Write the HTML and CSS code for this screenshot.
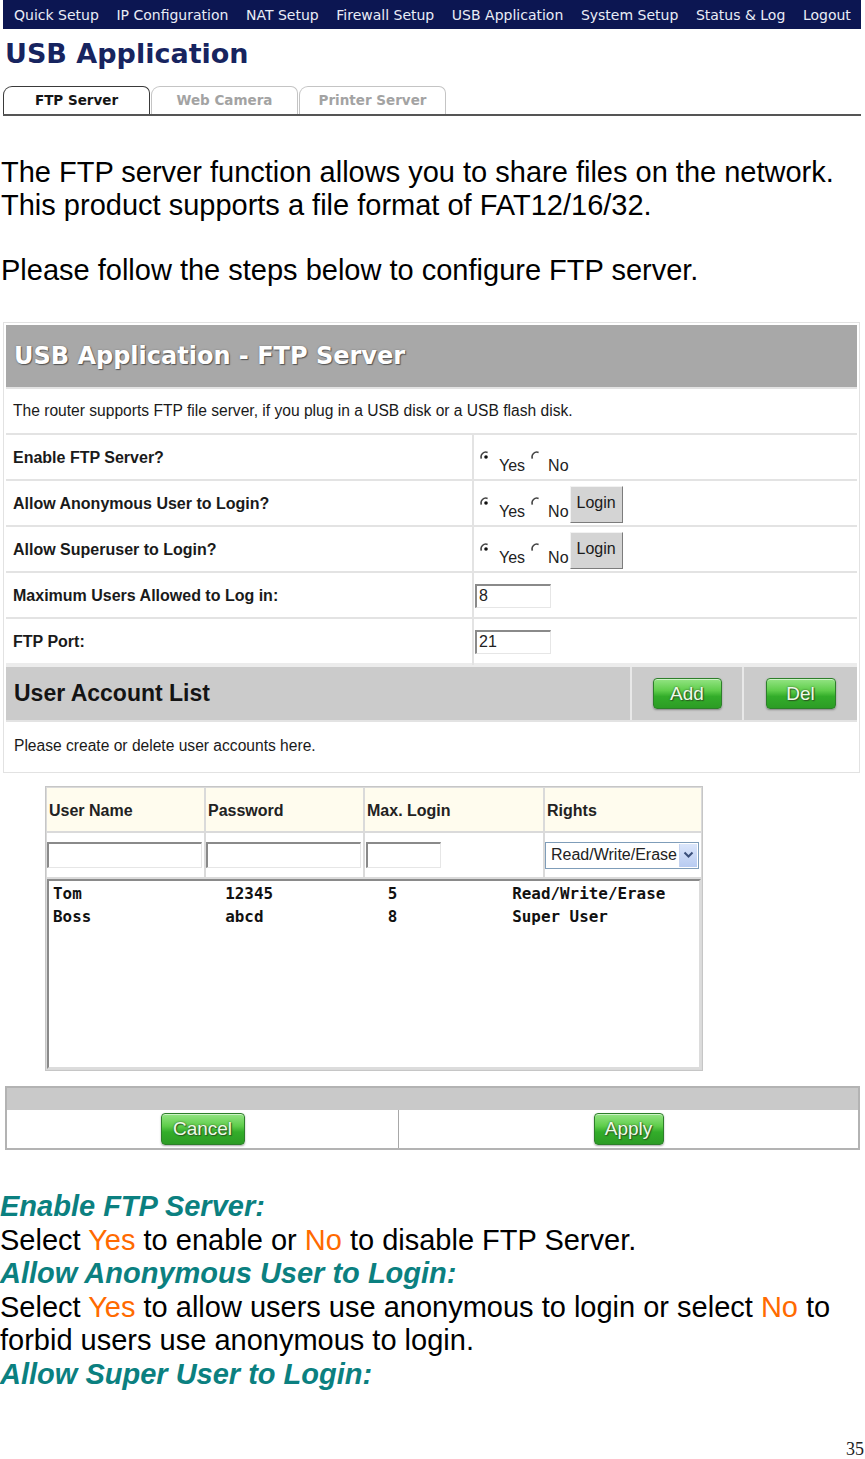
FILE: index.html
```html
<!DOCTYPE html>
<html lang="en">
<head>
<meta charset="utf-8">
<title>USB Application - FTP Server</title>
<link rel="stylesheet" href="styles.css">
</head>
<body>
<div class="page">
  <nav class="topnav">
    <span>Quick Setup</span>
    <span>IP Configuration</span>
    <span>NAT Setup</span>
    <span>Firewall Setup</span>
    <span>USB Application</span>
    <span>System Setup</span>
    <span>Status &amp; Log</span>
    <span>Logout</span>
  </nav>
  <h1 class="heading">USB Application</h1>
  <div class="tabs">
    <div class="tab active">FTP Server</div>
    <div class="tab">Web Camera</div>
    <div class="tab">Printer Server</div>
  </div>

  <div class="intro">
    <p>The FTP server function allows you to share files on the network.<br>This product supports a file format of FAT12/16/32.</p>
    <p class="gap">Please follow the steps below to configure FTP server.</p>
  </div>

  <div class="shot">
    <div class="panel">
      <div class="panel-title">USB Application - FTP Server</div>
      <div class="row info">The router supports FTP file server, if you plug in a USB disk or a USB flash disk.</div>
      <div class="row">
        <div class="label">Enable FTP Server?</div>
        <div class="value">
          <svg class="radio" width="12" height="12" viewBox="0 0 12 12"><path d="M1.4 7.6 A4.8 4.8 0 0 1 7.6 1.4" fill="none" stroke="#444" stroke-width="1.6"/><circle cx="6" cy="6" r="1.8" fill="#111"/></svg>
          <span class="opt yes">Yes</span>
          <svg class="radio" width="12" height="12" viewBox="0 0 12 12"><path d="M1.4 7.6 A4.8 4.8 0 0 1 7.6 1.4" fill="none" stroke="#444" stroke-width="1.6"/></svg>
          <span class="opt no">No</span>
        </div>
      </div>
      <div class="row">
        <div class="label">Allow Anonymous User to Login?</div>
        <div class="value">
          <svg class="radio" width="12" height="12" viewBox="0 0 12 12"><path d="M1.4 7.6 A4.8 4.8 0 0 1 7.6 1.4" fill="none" stroke="#444" stroke-width="1.6"/><circle cx="6" cy="6" r="1.8" fill="#111"/></svg>
          <span class="opt yes">Yes</span>
          <svg class="radio" width="12" height="12" viewBox="0 0 12 12"><path d="M1.4 7.6 A4.8 4.8 0 0 1 7.6 1.4" fill="none" stroke="#444" stroke-width="1.6"/></svg>
          <span class="opt no">No</span>
          <span class="login-btn">Login</span>
        </div>
      </div>
      <div class="row">
        <div class="label">Allow Superuser to Login?</div>
        <div class="value">
          <svg class="radio" width="12" height="12" viewBox="0 0 12 12"><path d="M1.4 7.6 A4.8 4.8 0 0 1 7.6 1.4" fill="none" stroke="#444" stroke-width="1.6"/><circle cx="6" cy="6" r="1.8" fill="#111"/></svg>
          <span class="opt yes">Yes</span>
          <svg class="radio" width="12" height="12" viewBox="0 0 12 12"><path d="M1.4 7.6 A4.8 4.8 0 0 1 7.6 1.4" fill="none" stroke="#444" stroke-width="1.6"/></svg>
          <span class="opt no">No</span>
          <span class="login-btn">Login</span>
        </div>
      </div>
      <div class="row">
        <div class="label">Maximum Users Allowed to Log in:</div>
        <div class="value field"><span class="textbox small">8</span></div>
      </div>
      <div class="row">
        <div class="label">FTP Port:</div>
        <div class="value field"><span class="textbox small">21</span></div>
      </div>
      <div class="acct">
        <div class="acct-title">User Account List</div>
        <div class="acct-cell"><span class="gbtn add">Add</span></div>
        <div class="acct-cell"><span class="gbtn del">Del</span></div>
      </div>
      <div class="row info tall">Please create or delete user accounts here.</div>
    </div>

    <div class="users">
      <div class="uh">User Name</div>
      <div class="uh">Password</div>
      <div class="uh">Max. Login</div>
      <div class="uh">Rights</div>
      <div class="uc"><span class="textbox wide"></span></div>
      <div class="uc"><span class="textbox wide"></span></div>
      <div class="uc"><span class="textbox short"></span></div>
      <div class="uc">
        <span class="select">Read/Write/Erase<span class="sel-arrow"><svg width="11" height="8" viewBox="0 0 11 8"><path d="M1.5 1.5 L5.5 5.5 L9.5 1.5" fill="none" stroke="#3a4f7a" stroke-width="2"/></svg></span></span>
      </div>
      <div class="ulist">
        <div class="listbox">
<pre>Tom               12345            5            Read/Write/Erase
Boss              abcd             8            Super User</pre>
        </div>
      </div>
    </div>

    <div class="actions">
      <div class="actions-bar"></div>
      <div class="actions-row">
        <div class="act-cell"><span class="gbtn cancel">Cancel</span></div>
        <div class="act-cell"><span class="gbtn apply">Apply</span></div>
      </div>
    </div>
  </div>

  <div class="desc">
    <div class="dh">Enable FTP Server:</div>
    <div>Select <span class="hl">Yes</span> to enable or <span class="hl">No</span> to disable FTP Server.</div>
    <div class="dh">Allow Anonymous User to Login:</div>
    <div>Select <span class="hl">Yes</span> to allow users use anonymous to login or select <span class="hl">No</span> to<br>forbid users use anonymous to login.</div>
    <div class="dh">Allow Super User to Login:</div>
  </div>

  <div class="pagenum">35</div>
</div>
</body>
</html>
```

FILE: styles.css
```css
html, body {
  margin: 0;
  padding: 0;
  background: #ffffff;
}

body {
  font-family: "Liberation Sans", Arial, sans-serif;
  color: #000;
}

.page {
  width: 865px;
}

/* top navigation */
.topnav {
  margin: 0 4px 0 3px;
  height: 29px;
  background: #0c1652;
  display: flex;
  align-items: center;
  gap: 17.6px;
  padding-left: 11px;
  font-family: "DejaVu Sans", Verdana, sans-serif;
  font-size: 14px;
  color: #e9ecf6;
  white-space: nowrap;
}

.heading {
  margin: 9px 0 0 0;
  padding-left: 5px;
  height: 32px;
  line-height: 32px;
  font-family: "DejaVu Sans", Verdana, sans-serif;
  font-weight: bold;
  font-size: 27px;
  color: #17245f;
}

/* tabs */
.tabs {
  display: flex;
  margin: 16px 4px 0 3px;
  border-bottom: 2px solid #555;
  height: 28px;
}

.tab {
  box-sizing: border-box;
  width: 147px;
  height: 28px;
  border: 1px solid #c4c4c4;
  border-bottom: 0;
  border-radius: 9px 7px 0 0;
  text-align: center;
  line-height: 27px;
  font-family: "DejaVu Sans", Verdana, sans-serif;
  font-weight: bold;
  font-size: 13.5px;
  color: #a3a3a3;
  margin-right: 1px;
}

.tab.active {
  border-color: #3a3a3a;
  color: #151515;
}

/* intro text */
.intro {
  margin-top: 40px;
  padding-left: 1px;
  font-size: 29px;
  line-height: 32.5px;
}

.intro p {
  margin: 0;
}

.intro p.gap {
  margin-top: 32.5px;
}

/* screenshot area */
.shot {
  margin-top: 36px;
}

.panel {
  margin-left: 3px;
  width: 857px;
  box-sizing: border-box;
  border: 1px solid #e2e2e2;
  padding: 2px;
}

.panel-title {
  height: 62px;
  line-height: 62px;
  background: #a8a8a8;
  padding-left: 8px;
  font-family: "DejaVu Sans", Verdana, sans-serif;
  font-weight: bold;
  font-size: 24px;
  color: #ffffff;
  text-shadow: 1px 1px 1px #555, 0 0 2px #777;
}

.row {
  display: grid;
  grid-template-columns: 466px 1fr;
  border-top: 2px solid #e3e3e3;
  height: 44px;
}

.row.info {
  display: block;
  padding-left: 7px;
  line-height: 44px;
  font-size: 15.6px;
  color: #1a1a1a;
}

.row.info.tall {
  height: 48px;
  line-height: 48px;
  padding-left: 8px;
}

.label {
  padding-left: 7px;
  line-height: 46px;
  font-weight: bold;
  font-size: 16px;
  color: #1a1a1a;
}

.value {
  border-left: 2px solid #e3e3e3;
  display: flex;
  align-items: flex-start;
  padding-left: 6px;
}

.radio {
  margin-top: 16px;
  flex: none;
}

.opt {
  margin-top: 22px;
  line-height: 18px;
  font-size: 16px;
  color: #222;
}

.opt.yes {
  margin-left: 7px;
  margin-right: 6px;
}

.opt.no {
  margin-left: 5px;
  margin-right: 0;
}

.login-btn {
  margin-top: 5px;
  margin-left: 1px;
  box-sizing: border-box;
  width: 53px;
  height: 37px;
  background: #d4d4d4;
  border: 1px solid;
  border-color: #f2f2f2 #7c7c7c #7c7c7c #f2f2f2;
  text-align: center;
  line-height: 32px;
  font-size: 16px;
  color: #1a1a1a;
}

.value.field {
  padding-left: 1px;
  align-items: center;
}

.textbox {
  display: block;
  box-sizing: border-box;
  background: #fff;
  border-style: solid;
  border-width: 2px 1px 1px 2px;
  border-color: #8a8a8a #e6e6e6 #e6e6e6 #8a8a8a;
  font-size: 16px;
  line-height: 20px;
  padding-left: 2px;
  color: #222;
}

.textbox.small {
  width: 76px;
  height: 24px;
}

/* account header */
.acct {
  display: grid;
  grid-template-columns: 1fr 110px 113px;
  column-gap: 2px;
  background: #e8e8e8;
  border-top: 4px solid #ececec;
  height: 53px;
}

.acct-title {
  background: #cbcbcb;
  padding-left: 8px;
  line-height: 53px;
  font-weight: bold;
  font-size: 23px;
  color: #141414;
}

.acct-cell {
  background: #cbcbcb;
  display: flex;
  align-items: center;
  justify-content: center;
}

/* green buttons */
.gbtn {
  display: inline-block;
  box-sizing: border-box;
  height: 32px;
  line-height: 29px;
  text-align: center;
  font-size: 19px;
  color: #eefbe8;
  text-shadow: 0 0 2px #2d5a23, 1px 1px 1px #2d5a23;
  background: linear-gradient(#93e483 0%, #5fcd4b 40%, #33ad2a 60%, #2c9c25 100%);
  border: 1px solid #2d7f2a;
  border-radius: 4px;
  box-shadow: inset 0 1px 0 rgba(255, 255, 255, 0.55), 0 1px 2px rgba(0, 0, 0, 0.35);
}

.gbtn.add { width: 69px; height: 31px; }
.gbtn.del { width: 70px; height: 31px; }
.gbtn.cancel { width: 84px; }
.gbtn.apply { width: 70px; }

/* users table */
.users {
  margin: 13px 0 0 45px;
  width: 658px;
  box-sizing: border-box;
  border: 1px solid #c6c6c6;
  padding: 1px;
  display: grid;
  grid-template-columns: 157px 157px 178px 156px;
  grid-template-rows: 43px 44px 190px;
  gap: 2px;
  background: #dadada;
}

.uh {
  background: #fffcee;
  padding-left: 2px;
  line-height: 45px;
  font-weight: bold;
  font-size: 16px;
  color: #222;
}

.uc {
  background: #fff;
  display: flex;
  align-items: center;
}

.textbox.wide {
  width: 155px;
  height: 26px;
}

.textbox.short {
  margin-left: 1px;
  width: 75px;
  height: 26px;
}

.select {
  position: relative;
  display: flex;
  align-items: center;
  box-sizing: border-box;
  width: 154px;
  height: 27px;
  border: 1px solid #7f9db9;
  padding-left: 5px;
  font-size: 16px;
  color: #222;
  background: #fff;
}

.sel-arrow {
  position: absolute;
  right: 1px;
  top: 1px;
  bottom: 1px;
  width: 17px;
  display: flex;
  align-items: center;
  justify-content: center;
  background: linear-gradient(#dbe6fb, #b8cbf1);
  border-left: 1px solid #c4d3f0;
}

.ulist {
  grid-column: 1 / 5;
  background: #fff;
}

.listbox {
  box-sizing: border-box;
  height: 190px;
  border-style: solid;
  border-width: 2px;
  border-color: #8a8a8a #dcdcdc #dcdcdc #8a8a8a;
  padding: 1px 0 0 4px;
}

.listbox pre {
  margin: 0;
  font-family: "DejaVu Sans Mono", "Liberation Mono", monospace;
  font-weight: bold;
  font-size: 15.9px;
  line-height: 23px;
  color: #111;
}

/* bottom actions */
.actions {
  margin: 15px 0 0 5px;
  width: 855px;
  box-sizing: border-box;
  border: 2px solid #b3b3b3;
}

.actions-bar {
  height: 22px;
  background: #c9c9c9;
}

.actions-row {
  display: grid;
  grid-template-columns: 391px 1fr;
  height: 38px;
}

.act-cell {
  display: flex;
  align-items: center;
  justify-content: center;
}

.act-cell + .act-cell {
  border-left: 1px solid #a8a8a8;
}

/* description */
.desc {
  margin-top: 40px;
  font-size: 29px;
  line-height: 33.6px;
}

.dh {
  font-weight: bold;
  font-style: italic;
  color: #0b8080;
}

.hl {
  color: #ff6a00;
}

.pagenum {
  margin-top: 50px;
  text-align: right;
  padding-right: 1px;
  font-family: "Liberation Serif", "Times New Roman", serif;
  font-size: 18px;
  line-height: 14px;
  color: #222;
}
```
